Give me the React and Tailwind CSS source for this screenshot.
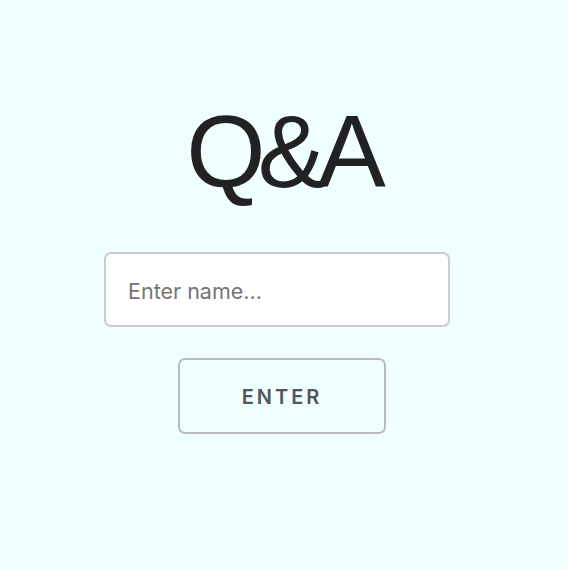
import React from "react";

export default function App() {
  return (
    <div className="min-h-[570px] w-full bg-[#f0ffff] font-['Liberation_Sans',Arial,sans-serif] pt-[97px]">
      <h1 className="text-center text-[102px] leading-[110px] tracking-[-8px] pr-[4px] text-[#222222] font-normal">Q&amp;A</h1>
      <div className="mt-[45px] ml-[104px] w-[346px] h-[75px] rounded-[7px] border-2 border-[#cccccc] bg-white flex items-center pl-[22px] pt-[3px]">
        <span className="font-['Inter',sans-serif] text-[21.5px] text-[#757575]">Enter name...</span>
      </div>
      <div className="mt-[31px] ml-[178px] w-[208px] h-[76px] rounded-[7px] border-2 border-[#bbbbbb] flex items-center justify-center pt-[2px]">
        <span className="font-['Inter',sans-serif] text-[20px] font-semibold tracking-[3px] text-[#555555]">ENTER</span>
      </div>
    </div>
  );
}
